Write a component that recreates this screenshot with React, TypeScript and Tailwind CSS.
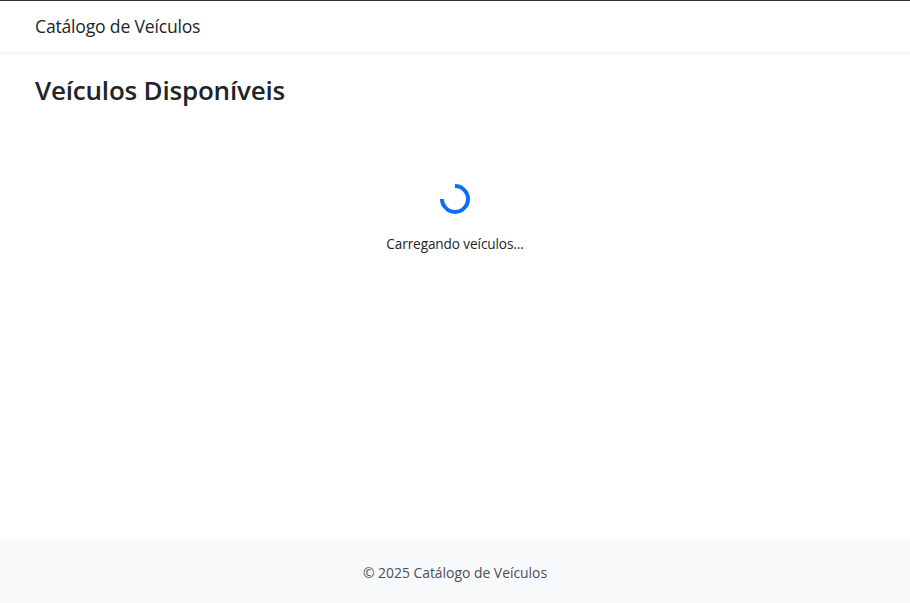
import React from "react";

export default function App() {
  return (
    <div
      className="flex min-h-[603px] flex-col bg-white text-[#212529]"
      style={{ fontFamily: '"Open Sans", "Noto Sans", sans-serif' }}
    >
      <header className="h-[52px] border-t border-[#333] bg-white shadow-[0_1px_3px_rgba(0,0,0,0.08)]">
        <div className="flex h-full items-center px-[35px]">
          <span className="text-[17.6px] tracking-[-0.2px]">Catálogo de Veículos</span>
        </div>
      </header>
      <main className="flex-1 px-[35px]">
        <h2 className="mt-[21px] text-[26px] font-semibold leading-[34px] tracking-[-0.2px]">
          Veículos Disponíveis
        </h2>
        <div className="mt-[77px] flex flex-col items-center">
          <div className="h-[30px] w-[30px] rotate-[225deg] rounded-full border-[4px] border-[#0d6efd] border-r-transparent" />
          <p className="mt-[20px] text-[13.6px] tracking-[-0.1px]">Carregando veículos...</p>
        </div>
      </main>
      <footer className="flex h-[63px] items-center justify-center bg-[#f8f9fa]">
        <span className="mt-[3px] text-[13.9px] text-[#495057]">© 2025 Catálogo de Veículos</span>
      </footer>
    </div>
  );
}
